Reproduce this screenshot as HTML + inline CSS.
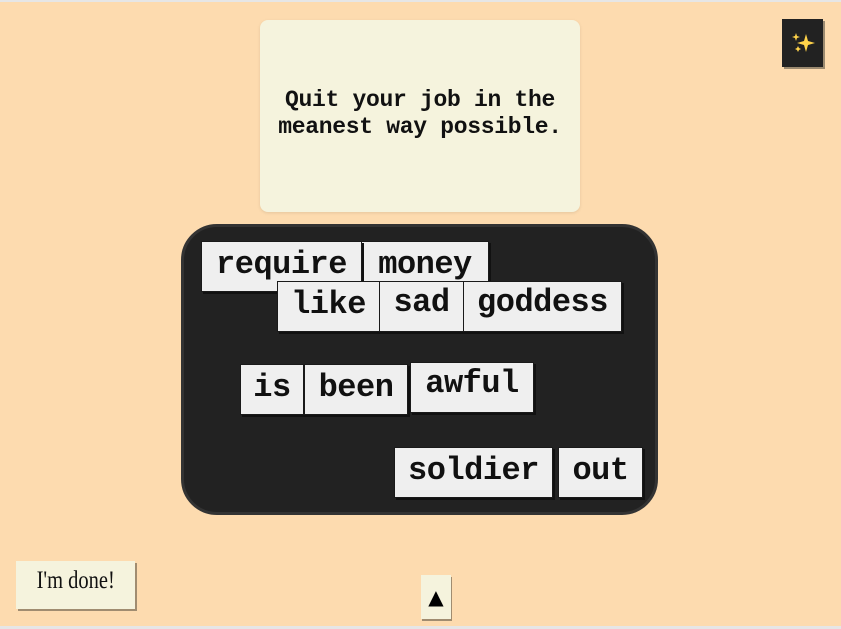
<!DOCTYPE html>
<html><head><meta charset="utf-8"><style>
html,body{margin:0;padding:0;}
body{width:841px;height:629px;background:#fddbaf;position:relative;overflow:hidden;font-family:"Liberation Mono",monospace;}
.top{position:absolute;left:0;top:0;width:841px;height:2px;background:#e6e6e6;}
.bot{position:absolute;left:0;top:626px;width:841px;height:3px;background:#e6e6e6;}
.card{position:absolute;left:260px;top:20px;width:320px;height:192px;background:#f5f3dd;border-radius:8px;box-shadow:0 1px 3px rgba(0,0,0,.1);}
.card p{position:absolute;left:0;right:0;top:67px;margin:0;text-align:center;font-size:23px;line-height:27px;font-weight:bold;color:#111;letter-spacing:-0.3px;}
.board{position:absolute;left:181px;top:224px;width:471px;height:285px;background:#222;border:3px solid #333;border-radius:36px;}
.t{position:absolute;background:#efefef;height:51px;box-sizing:border-box;border:1px solid #1a1a1a;font-size:32px;font-weight:bold;line-height:46px;text-align:center;color:#111;box-shadow:2px 2px 0 #111;letter-spacing:-0.5px;}
.spark{position:absolute;left:782px;top:19px;width:41px;height:48px;background:#222;box-shadow:2px 2px 0 #9b8a70;}
.done{position:absolute;left:16px;top:561px;width:119px;height:48px;background:#f5f3dd;box-shadow:2px 2px 0 #a08c70;font-family:"Liberation Serif",serif;font-size:25px;line-height:40px;text-align:center;color:#111;}
.done span{display:inline-block;transform:scaleX(.82);}
.up{position:absolute;left:421px;top:575px;width:30px;height:44px;background:#f5f3dd;box-shadow:1px 2px 0 #a08c70;text-align:center;font-size:20px;line-height:44px;color:#000;font-family:"DejaVu Sans",sans-serif;}
</style></head><body>
<div class="top"></div>
<div class="card"><p>Quit your job in the<br>meanest way possible.</p></div>
<div class="spark"><svg width="41" height="48" viewBox="0 0 41 48">
<path d="M24 15 L26 22 L33 24 L26 26 L24 33 L22 26 L15 24 L22 22 Z" fill="#ffd34a"/>
<path d="M14 14 L15 17 L18 18 L15 19 L14 22 L13 19 L10 18 L13 17 Z" fill="#ffd34a"/>
<path d="M16 27 L17 29 L19 30 L17 31 L16 33 L15 31 L13 30 L15 29 Z" fill="#ffd34a"/>
</svg></div>
<div class="board"></div>
<div class="t" style="left:361px;top:241px;width:128px;">money</div>
<div class="t" style="left:201px;top:241px;width:161px;">require</div>
<div class="t" style="left:277px;top:281px;width:103px;">like</div>
<div class="t" style="left:379px;top:281px;width:85px;line-height:42px;">sad</div>
<div class="t" style="left:463px;top:281px;width:159px;line-height:42px;">goddess</div>
<div class="t" style="left:240px;top:364px;width:64px;">is</div>
<div class="t" style="left:304px;top:364px;width:104px;">been</div>
<div class="t" style="left:410px;top:362px;width:124px;line-height:42px;">awful</div>
<div class="t" style="left:394px;top:447px;width:159px;">soldier</div>
<div class="t" style="left:558px;top:447px;width:85px;">out</div>
<div class="done"><span>I'm done!</span></div>
<div class="up">▲</div>
<div class="bot"></div>
</body></html>
